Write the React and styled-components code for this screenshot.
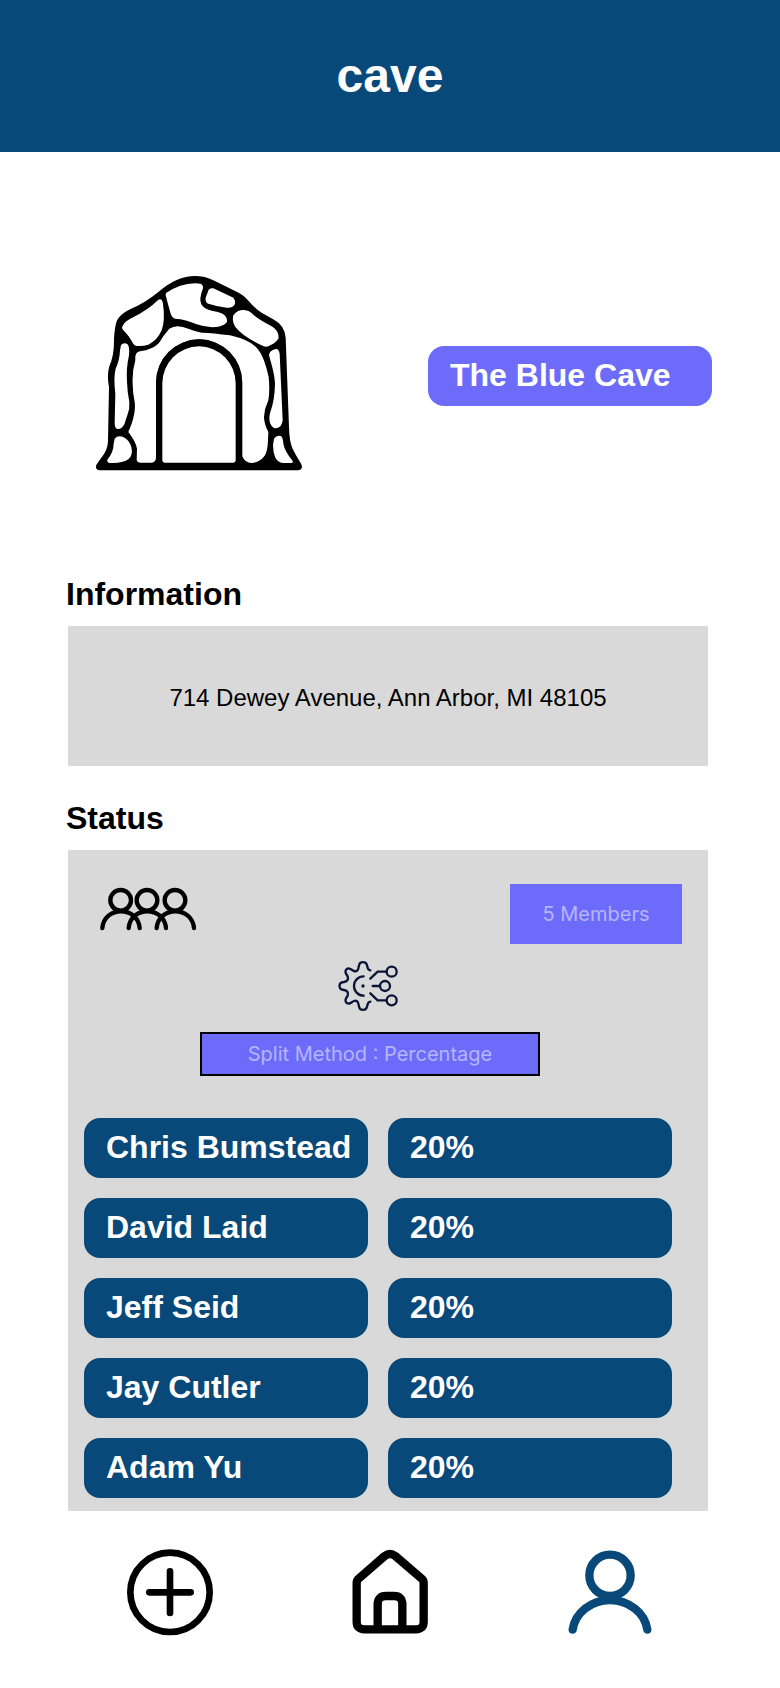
import React from "react";
import styled, { createGlobalStyle } from "styled-components";

const navy = "#08497A";
const violet = "#6D6CFA";
const grey = "#D9D9D9";

const GlobalStyle = createGlobalStyle`
  *, *::before, *::after { box-sizing: border-box; }
  body {
    margin: 0;
    background: #fff;
    color: #000;
    font-family: "Liberation Sans", Arial, sans-serif;
  }
  svg { display: block; flex: none; }
`;

const Header = styled.header`
  display: flex;
  align-items: center;
  justify-content: center;
  height: 152px;
  background: ${navy};
  color: #fff;
`;

const Title = styled.h1`
  margin: 0;
  font-size: 48px;
  line-height: 56px;
`;

const Hero = styled.section`
  display: flex;
  align-items: center;
  justify-content: space-between;
  padding: 124px 68px 100px 96px;
`;

const CaveName = styled.h2`
  flex: 0 1 284px;
  margin: 0;
  padding: 11px 22px 13px;
  border-radius: 16px;
  background: ${violet};
  color: #fff;
  font-size: 32px;
  line-height: 36px;
`;

const Section = styled.section`
  padding: 0 72px 0 66px;
  margin-bottom: ${(p) => (p.$last ? "0" : "34px")};
`;

const SectionTitle = styled.h2`
  margin: 0 0 14px;
  font-size: 32px;
  line-height: 36px;
`;

const Panel = styled.div`
  margin-left: 2px;
  background: ${grey};
`;

const Address = styled.p`
  margin: 0;
  padding: 58px 0 54px;
  font-size: 24px;
  line-height: 28px;
  text-align: center;
`;

const MembersRow = styled.div`
  display: flex;
  justify-content: space-between;
  padding: 34px 26px 0 32px;
`;

const VioletButton = styled.button`
  width: ${(p) => p.$width};
  height: ${(p) => p.$height};
  padding: 0;
  border: ${(p) => (p.$outlined ? "2px solid #000" : "0")};
  background: ${violet};
  color: rgba(255, 255, 255, 0.5);
  font-family: Inter, sans-serif;
  font-size: 20px;
  font-weight: 400;
  line-height: 24px;
`;

const Method = styled.div`
  display: flex;
  flex-direction: column;
  align-items: center;
  gap: 20px;
  padding: 16px 36px 42px 0;
`;

const Shares = styled.table`
  display: block;
  padding: 0 36px 13px 16px;
`;

const ShareList = styled.tbody`
  display: grid;
  gap: 20px;
`;

const ShareRow = styled.tr`
  display: grid;
  grid-template-columns: 1fr 1fr;
  gap: 20px;
`;

const ShareCell = styled.td`
  padding: 11px 0 13px 22px;
  border-radius: 16px;
  background: ${navy};
  color: #fff;
  font-size: 32px;
  font-weight: 700;
  line-height: 36px;
  white-space: nowrap;
`;

const NavBar = styled.nav`
  display: flex;
  justify-content: space-between;
  padding: 19px 110px 38px;
`;

const NavLink = styled.a`
  color: ${(p) => (p.$active ? navy : "#000")};
`;

const CaveIcon = () => (
  <svg width="206" height="200" viewBox="48 47 618 600" role="img" aria-label="Cave">
    <path
      d="M58 630Q44 628 49 614Q54 606 70 584Q84 565 84 540L87 380Q80 345 88 318Q103 285 102 235Q104 200 110 183Q118 163 150 147Q195 128 235 95Q290 47 345 47Q375 47 400 60L470 94Q490 103 506 122Q525 145 545 157L582 178Q614 195 617 232L627 500Q628 545 638 565Q645 580 662 608Q672 625 656 630Z"
      fill="#000"
    />
    <g fill="#fff">
      <path d="M128 196Q135 183 155 173Q205 148 235 118Q246 112 249 130Q256 180 245 210Q232 240 205 253Q190 258 170 257Q161 256 157 245Q145 224 129 208Q124 202 128 196Z" />
      <path d="M258 98Q300 70 345 69L362 70Q370 74 369 84Q356 118 364 132Q370 146 398 152Q425 157 433 164Q442 172 441 184Q436 194 415 199Q385 204 350 192Q318 177 285 175Q276 172 272 160Q262 125 257 105Z" />
      <path d="M386 88Q391 83 400 84L457 111Q467 118 465 130Q459 144 440 142Q410 138 385 130Q375 126 377 112Z" />
      <path d="M460 165Q472 148 492 149Q508 150 520 163Q535 177 575 198Q596 210 596 232Q592 244 572 254Q560 263 548 256Q490 230 466 200Q455 185 460 165Z" />
      <path d="M123 255Q130 245 142 251Q150 260 147 285Q138 325 141 365Q142 395 148 425Q150 445 142 465L133 492Q125 508 112 506Q104 504 104 488L106 400Q100 350 107 325Q119 300 120 270Z" />
      <path d="M567 285Q568 270 587 266Q597 265 599 280L608 480Q606 502 588 504Q578 504 571 490Q565 475 571 455Q584 420 585 370Q584 345 574 310Z" />
      <path d="M104 535Q112 525 128 529Q148 538 154 560Q160 585 145 597Q125 610 90 608Q80 606 82 598Q101 575 101 550Z" />
      <path d="M582 535Q590 523 603 527Q609 532 610 550Q614 572 638 602Q641 608 630 608L608 608Q595 606 586 592Q579 575 579 555Z" />
      <path d="M170 600Q172 607 180 607L215 607Q227 605 228 592L228 367A129.500 130 0 0 1 487 367L487 588Q494 607 515 608Q540 607 555 585Q563 570 564 540L565 515Q552 490 552 470Q553 445 565 420Q570 390 566 350Q553 290 535 268Q515 240 450 225Q400 218 365 217Q345 213 325 205Q290 190 268 205Q250 225 237 248Q218 268 180 273Q164 275 166 300Q156 335 158 370Q158 395 164 425Q168 450 155 490L145 515Q168 545 171 565Z" />
    </g>
    <path d="M228 612V367A129 130 0 0 1 486 367V612Z" fill="#000" />
    <path d="M247 600V369A110 111 0 0 1 467 369V600Q467 607 460 607H254Q247 607 247 600Z" fill="#fff" />
  </svg>
);

const GroupIcon = () => (
  <svg
    width="96"
    height="60"
    viewBox="30 42 288 180"
    fill="none"
    stroke="#000"
    strokeWidth="13"
    strokeLinecap="round"
    role="img"
    aria-label="Members"
  >
    {[92, 171, 255].map((x) => (
      <g key={x}>
        <circle cx={x} cy="91" r="31" />
        <path d={`M${x - 55} 174C${x - 48} 107 ${x + 50} 107 ${x + 57} 174`} />
      </g>
    ))}
  </svg>
);

const SplitIcon = () => (
  <svg
    width="64"
    height="52"
    viewBox="54 30 192 156"
    fill="none"
    stroke="#0B1637"
    strokeWidth="7"
    strokeLinecap="round"
    strokeLinejoin="round"
    role="img"
    aria-label="Split method"
  >
    <path d="M151 61C142 60 143 52 141 46C139 33 119 33 117 46C115 58 113 66 102 63C95 61 90 51 80 57C71 65 80 74 83 79C86 88 82 95 72 96C54 97 54 119 72 120C82 121 86 128 83 137C80 142 71 151 80 159C90 165 95 155 102 153C113 150 115 158 117 170C119 183 139 183 141 170C143 164 142 156 151 155" />
    <path d="M131 79A29 29 0 0 0 131 137" />
    <circle cx="129" cy="108" r="5" fill="#0B1637" stroke="none" />
    <path d="M151 86L173 65H198M158 108H180M151 130L173 151H198" />
    <circle cx="215" cy="65" r="15" />
    <circle cx="195" cy="108" r="15" />
    <circle cx="215" cy="151" r="15" />
  </svg>
);

const navIcons = {
  add: (
    <>
      <circle cx="180" cy="187" r="119" strokeWidth="20" />
      <path d="M118 187H242M180 124V249" strokeWidth="20" />
    </>
  ),
  home: (
    <path
      d="M80 158Q80 151 86 146L164 78Q180 66 196 78L275 146Q281 151 281 158V275Q281 298 258 298H103Q80 298 80 275ZM143 298V223Q143 198 168 198H192Q217 198 217 223V298"
      strokeWidth="25"
    />
  ),
  profile: (
    <>
      <circle cx="180" cy="136" r="62" strokeWidth="25" />
      <path d="M68 299A113 102 0 0 1 292 299" strokeWidth="25" />
    </>
  ),
};

const NavIcon = ({ name }) => (
  <svg
    width="120"
    height="120"
    viewBox="0 0 360 360"
    fill="none"
    stroke="currentColor"
    strokeLinecap="round"
    strokeLinejoin="round"
    aria-hidden="true"
  >
    {navIcons[name]}
  </svg>
);

const members = [
  ["Chris Bumstead", "20%"],
  ["David Laid", "20%"],
  ["Jeff Seid", "20%"],
  ["Jay Cutler", "20%"],
  ["Adam Yu", "20%"],
];

export default function App() {
  return (
    <>
      <GlobalStyle />
      <Header>
        <Title>cave</Title>
      </Header>
      <main>
        <Hero>
          <CaveIcon />
          <CaveName>The Blue Cave</CaveName>
        </Hero>
        <Section>
          <SectionTitle>Information</SectionTitle>
          <Panel>
            <Address>714 Dewey Avenue, Ann Arbor, MI 48105</Address>
          </Panel>
        </Section>
        <Section $last>
          <SectionTitle>Status</SectionTitle>
          <Panel>
            <MembersRow>
              <GroupIcon />
              <VioletButton type="button" $width="172px" $height="60px">
                5 Members
              </VioletButton>
            </MembersRow>
            <Method>
              <SplitIcon />
              <VioletButton type="button" $width="340px" $height="44px" $outlined>
                Split Method : Percentage
              </VioletButton>
            </Method>
            <Shares>
              <ShareList>
                {members.map(([name, share]) => (
                  <ShareRow key={name}>
                    <ShareCell>{name}</ShareCell>
                    <ShareCell>{share}</ShareCell>
                  </ShareRow>
                ))}
              </ShareList>
            </Shares>
          </Panel>
        </Section>
      </main>
      <NavBar aria-label="Main">
        <NavLink href="#add" aria-label="Add">
          <NavIcon name="add" />
        </NavLink>
        <NavLink href="#home" aria-label="Home">
          <NavIcon name="home" />
        </NavLink>
        <NavLink href="#profile" aria-label="Profile" aria-current="page" $active>
          <NavIcon name="profile" />
        </NavLink>
      </NavBar>
    </>
  );
}
